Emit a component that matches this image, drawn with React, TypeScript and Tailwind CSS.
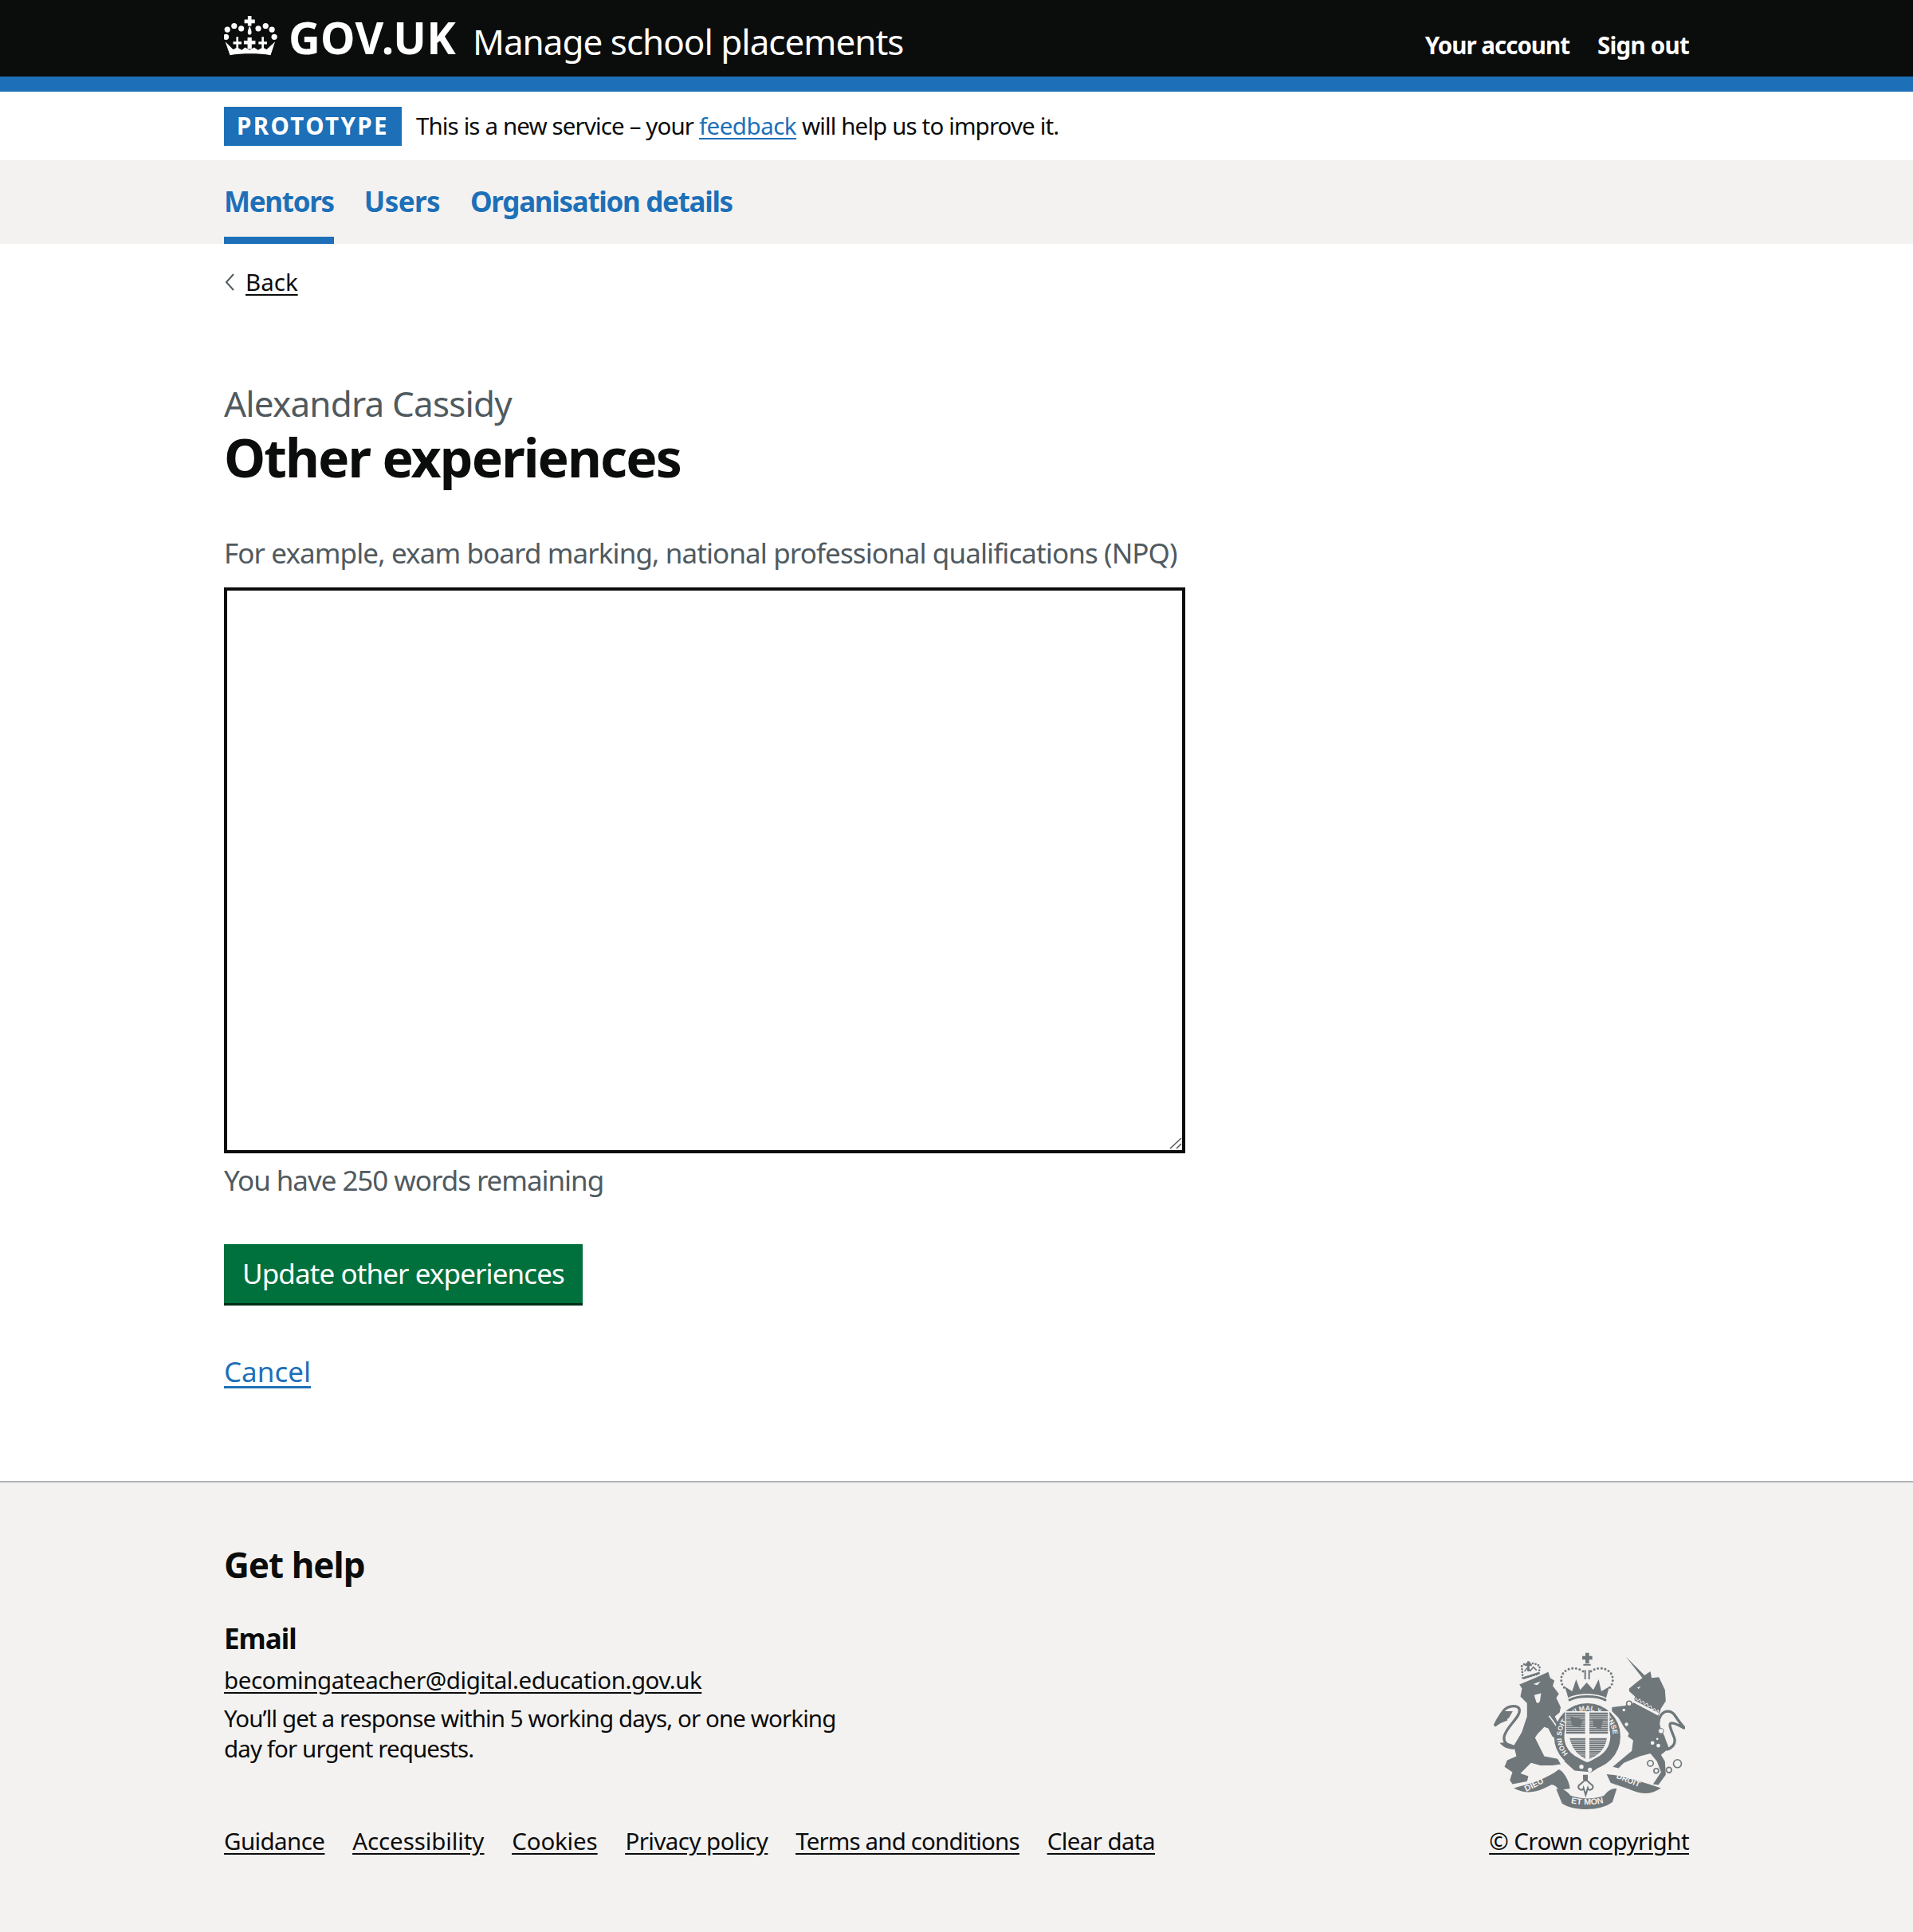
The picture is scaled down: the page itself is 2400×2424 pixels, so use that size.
import React from "react";

const F = "font-['Noto_Sans','Liberation_Sans',sans-serif]";

function Crown() {
  const dots = [[45,110],[50,82],[76,68],[103,78],[168,78],[196,68],[220,82],[229,110]];
  return (
    <svg width="67" height="50" viewBox="38 30 202 152" className="shrink-0 -mt-[14px]" fill="#fff">
      {dots.map(([x, y], i) => <circle key={i} cx={x} cy={y} r="11" />)}
      <path d="M128 30h14v14h13v14h-13v10h-14V58h-13V44h13z" />
      <path d="M135 68c6 14 8 22 7 28-2 8-12 8-14 0-1-6 1-14 7-28z" />
      <path d="M60 180L42 128l30 30 16-8 17 10 13-10 17 10 17-10 15 10 18-10 15 8 32-30-17 52c-45-8-110-8-155 0z" />
      <path d="M84 110h8v18h12v10H92v16h-8v-16H72v-10h12z" />
      <path d="M127 112h16v12h14v14h-14v18h-16v-18h-14v-14h14z" />
      <path d="M181 110h8v18h12v10h-12v16h-8v-16h-12v-10h12z" />
    </svg>
  );
}

function Arms() {
  const c = "#6f777b";
  const bg = "#f3f2f1";
  return (
    <svg width="240" height="197" viewBox="100 78 720 592" fill={c}>
      <defs>
        <path id="garter" d="M380 460 A97 97 0 1 1 524 460" />
        <path id="etmon" d="M372 642 Q450 664 532 642" />
        <pattern id="h" width="8" height="8" patternUnits="userSpaceOnUse">
          <rect width="8" height="8" fill={c} />
          <rect width="8" height="2" fill={bg} />
        </pattern>
      </defs>
      {/* lion */}
      <path d="M196 200l59-25 50-23 7 23 16 10-6 20 23 30-10 15 17 35-4 20-18 15 35 75-10 25-35-25-15-30-15-5-25 25-10 15 15 30 20 40 50 10 12 20-32 5-45 0-35-10-40 40 30 10-5 20-55 10-10-15 10-30-30-20 10-25 35-15-10-40 30-50 20-60v-50l-25-25 6-30z" />
      <path d="M195 440c-45-5-70-25-50-60 18-35 60-65 50-90-10-15-45-10-60 10-15 20-30 50-32 55 17-15 32-20 47-25" fill="none" stroke={c} strokeWidth="10" />
      <path d="M135 300c-14 18-28 44-32 55 22-16 40-20 54-30l14-25z" />
      <path d="M122 420c22-6 44 4 60 12l-6 12c-20 0-40-6-54-24z" />
      <path d="M248 198l28-10-12 14zM252 240c8-4 20-4 26-8l-4 28c-4 14-14 12-16 0z" fill={bg} />
      <path d="M205 130c10-14 55-14 68 2l-4 28-60 16z" fill="none" stroke={c} strokeWidth="8" strokeLinecap="round" strokeDasharray="0 11" />
      <path d="M210 172l60-20 2 8-60 20z" />
      <path d="M226 112h8v10h9v8h-9v20h-8v-20h-9v-8h9z" />
      <path d="M215 150l12-14 10 12 12-14 12 12" fill="none" stroke={c} strokeWidth="5" />
      <path d="M308 318l50 68" fill="none" stroke={bg} strokeWidth="5" />

      {/* unicorn */}
      <path d="M598 95l70 70 22-15 5 25 27-3 23 48 3 42-18 28-8 25-2 35 10 20 15 30 15 40-30 25 15 25 3 50-28 38-20-3 30-45-15-40-25-30-40 10-60 25-20 20-22-5 42-35 30-25 5-40-20-15 10-25-5 15-20-25-20-35-25-25v-15l45-5 35-10 7-25-22-20v-10l30-25 20-15z" />
      <path d="M740 400c-15-30-30-55-10-85 15-20 40-20 55 5 10 15 25 35 35 45-20-10-35-20-50-20-15 0 0 30 10 55 8 25-10 40-30 45" fill="none" stroke={c} strokeWidth="10" />
      <path d="M628 258l95 50-5 8-95-50z" fill={bg} />
      <path d="M636 250l6 12 8-8 4 14 10-6 4 14 10-6 4 14 10-4 4 14 10-4 6 12 8-6-2 14-92-46z" fill="none" stroke={bg} strokeWidth="3" />
      <circle cx="730" cy="375" r="10" fill={bg} stroke={c} strokeWidth="3" />
      <circle cx="698" cy="420" r="7" fill={bg} />
      <circle cx="720" cy="430" r="7" fill={bg} />
      <circle cx="716" cy="405" r="4" fill={bg} />
      <path d="M640 212l14-6-8 10z" fill={bg} />
      <g fill={bg} stroke={c} strokeWidth="5">
        <circle cx="690" cy="497" r="11" />
        <circle cx="712" cy="525" r="9" />
        <circle cx="760" cy="522" r="10" />
        <circle cx="792" cy="498" r="15" />
        <circle cx="610" cy="272" r="10" />
        <circle cx="590" cy="296" r="8" />
        <circle cx="600" cy="350" r="9" />
      </g>

      {/* royal crown */}
      <path d="M445 80h14v12h12v14h-12v14h-14v-14h-12V92h12z" />
      <path d="M436 150c-40-25-85-5-82 35 2 20 14 32 28 38M466 150c40-25 85-5 82 35-2 20-14 32-28 38" fill="none" stroke={c} strokeWidth="9" strokeLinecap="round" strokeDasharray="0 14" />
      <path d="M437 122h28v6h-28zM441 145h6v35h-6zM456 145h6v35h-6z" />
      <path d="M368 208l27 17 15-45 15 40 25-28 25 28 20-40 10 45 30-17-12 42c-35-20-110-20-143 0z" />
      <path d="M385 258c30-18 105-18 135 0" fill="none" stroke={c} strokeWidth="9" strokeLinecap="round" />

      {/* garter */}
      <circle cx="452" cy="395" r="106" fill="none" stroke={c} strokeWidth="38" />
      <text fontSize="26" fontWeight="700" fill={bg} fontFamily="Liberation Sans">
        <textPath href="#garter">HONI SOIT QUI MAL Y PENSE</textPath>
      </text>
      <path d="M372 472l-6 18 38 34 64 6 55-36-6-14z" />
      <circle cx="430" cy="510" r="8" fill={bg} />
      <circle cx="462" cy="521" r="8" fill={bg} />
      <path d="M368 300h168v85c0 50-36 90-84 108-48-18-84-58-84-108z" fill={bg} />
      <rect x="372" y="304" width="72" height="82" fill="url(#h)" />
      <path d="M460 304h70v82h-70z" fill="url(#h)" />
      <path d="M385 400h60v80c-28-14-52-40-60-80z" fill="url(#h)" />
      <path d="M460 400h66c-4 40-30 66-66 80z" fill="url(#h)" />
      <path d="M388 320l48 12-12 30-30-10zM472 330l40 0-10 40-26-14z" />

      {/* ribbon */}
      <path d="M175 590c60-15 125-35 170-70 18 8 38 40 42 72l-42 6c-10-15-18-22-30-20-45 25-90 40-140 12z" />
      <path d="M335 594c20-6 40 5 55 25 40 14 90 14 125 0 15-18 30-30 48-26l-16 50c-45 35-145 35-190 5z" />
      <path d="M525 538c65 5 145 32 205 52-30 20-60 25-95 14-40-16-75-26-95-34z" />
      <text x="222" y="604" fontSize="32" fontWeight="700" fill={bg} fontFamily="Liberation Sans" transform="rotate(-27 222 604)">DIEU</text>
      <text x="560" y="552" fontSize="30" fontWeight="700" fill={bg} fontFamily="Liberation Sans" transform="rotate(22 560 552)">DROIT</text>
      <text fontSize="32" fontWeight="700" fill={bg} fontFamily="Liberation Sans" textAnchor="middle">
        <textPath href="#etmon" startOffset="50%">ET MON</textPath>
      </text>
      <path d="M436 540h18v20h-18z" />
      <path d="M446 558c12 10 20 18 26 22 6 14-14 24-18 10l-8 26-8-26c-4 14-24 4-18-10 6-4 14-12 26-22z" fill="none" stroke={c} strokeWidth="6" />
    </svg>
  );
}

export default function App() {
  return (
    <div className={`${F} min-h-[2424px] flex flex-col bg-white text-[#0b0c0c] text-[29.5px] leading-[38px]`}>
      <header className="bg-[#0b0c0c] border-b-[19px] border-[#1d70b8] h-[115px] shrink-0">
        <div className="mx-[281px] flex items-start justify-between text-white">
          <div className="flex items-center pt-[18px]">
            <Crown />
            <span className="ml-[14px] -mt-[11px] text-[55px] leading-[62px] font-bold tracking-[0.3px]">GOV.UK</span>
            <span className="ml-[21px] text-[44px] leading-[68px] font-normal tracking-[-1px]">Manage school placements</span>
          </div>
          <nav className="flex gap-[35px] pt-[38px] text-[29.5px] leading-[38px] font-bold">
            <span className="tracking-[-1px]">Your account</span>
            <span className="tracking-[-0.75px]">Sign out</span>
          </nav>
        </div>
      </header>

      <div className="h-[86px] shrink-0 mx-[281px] flex items-center gap-[18px]">
        <span className="bg-[#1d70b8] text-white font-bold tracking-[2.4px] px-[16px] h-[49px] flex items-center text-[29.5px]">PROTOTYPE</span>
        <span className="tracking-[-0.87px]">This is a new service – your <a className="text-[#1d70b8] underline underline-offset-[4px] tracking-[-0.5px]">feedback</a> will help us to improve it.</span>
      </div>

      <nav className="bg-[#f3f2f1] h-[105px] shrink-0">
        <div className="mx-[281px] flex gap-[38px] h-full">
          <span className="text-[#1d70b8] font-bold text-[35px] leading-[44px] pt-[30px] border-b-[9px] border-[#1d70b8] tracking-[-1.3px]">Mentors</span>
          <span className="text-[#1d70b8] font-bold text-[35px] leading-[44px] pt-[30px] tracking-[-0.6px]">Users</span>
          <span className="text-[#1d70b8] font-bold text-[35px] leading-[44px] pt-[30px] tracking-[-1.3px]">Organisation details</span>
        </div>
      </nav>

      <main className="mx-[281px] flex-1 flex flex-col">
        <a className="mt-[29px] flex items-center gap-[12px] h-[38px]">
          <svg width="15" height="24" viewBox="0 0 15 24" fill="none" stroke="#505a5f" strokeWidth="2"><path d="M12 2L3 12l9 10" /></svg>
          <span className="underline underline-offset-[4px]">Back</span>
        </a>
        <p className="mt-[105px] text-[#505a5f] text-[44px] leading-[56px] tracking-[-0.8px]">Alexandra Cassidy</p>
        <h1 className="font-bold text-[66px] leading-[76px] mt-[1px] tracking-[-1.9px]">Other experiences</h1>
        <p className="mt-[61px] text-[#505a5f] text-[35px] leading-[44px] tracking-[-0.9px]">For example, exam board marking, national professional qualifications (NPQ)</p>
        <div className="relative mt-[21px] w-[1206px] h-[710px]">
          <textarea className="w-full h-full border-[4px] border-[#0b0c0c] block outline-none resize-none" />
          <svg width="16" height="16" viewBox="0 0 16 16" className="absolute right-[4px] bottom-[5px]" stroke="#555" strokeWidth="1.5">
            <path d="M1 15L15 2M9 15l6-6" />
          </svg>
        </div>
        <p className="mt-[12px] text-[#505a5f] text-[35px] leading-[44px] tracking-[-1.05px]">You have 250 words remaining</p>
        <button className="mt-[58px] self-start bg-[#00703c] text-white text-[35px] leading-[44px] h-[77px] px-[23px] border-b-[3px] border-[#002d18] tracking-[-0.9px]">Update other experiences</button>
        <a className="mt-[61px] self-start text-[#1d70b8] underline underline-offset-[5px] text-[35px] leading-[44px]">Cancel</a>
      </main>

      <footer className="bg-[#f3f2f1] border-t-[2px] border-[#b1b4b6] h-[566px] shrink-0">
        <div className="mx-[281px] flex justify-between items-end h-full pb-[95px]">
          <div>
            <h2 className="font-bold text-[44px] leading-[52px] tracking-[-1px]">Get help</h2>
            <h3 className="font-bold text-[35px] leading-[44px] mt-[45px] tracking-[-1px]">Email</h3>
            <a className="underline underline-offset-[4px] block mt-[11px] tracking-[-0.45px]">becomingateacher@digital.education.gov.uk</a>
            <p className="w-[800px] mt-[10px] tracking-[-0.9px]">You’ll get a response within 5 working days, or one working day for urgent requests.</p>
            <div className="flex gap-[35px] mt-[78px] underline underline-offset-[4px]">
              <a className="tracking-[-0.6px]">Guidance</a>
              <a className="tracking-[-0.1px]">Accessibility</a>
              <a className="tracking-[-0.2px]">Cookies</a>
              <a className="tracking-[-0.55px]">Privacy policy</a>
              <a className="tracking-[-0.85px]">Terms and conditions</a>
              <a className="tracking-[-0.6px]">Clear data</a>
            </div>
          </div>
          <div className="flex flex-col items-end">
            <div className="mr-[5px] mb-[21px]"><Arms /></div>
            <a className="underline underline-offset-[4px] tracking-[-0.55px]">© Crown copyright</a>
          </div>
        </div>
      </footer>
    </div>
  );
}
